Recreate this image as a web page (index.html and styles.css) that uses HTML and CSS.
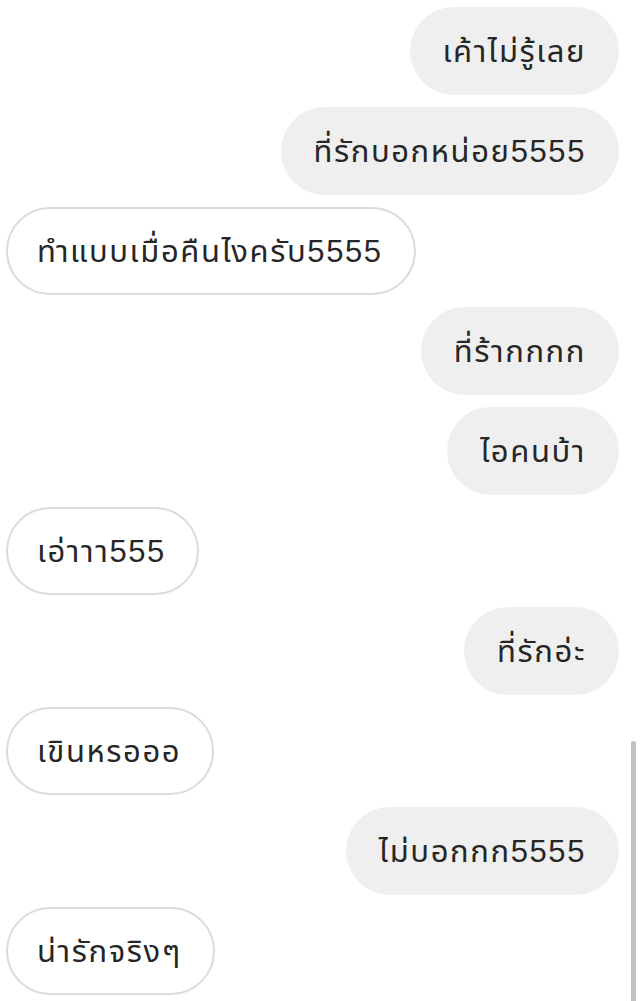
FILE: index.html
```html
<!DOCTYPE html>
<html lang="th">
<head>
<meta charset="utf-8">
<link rel="stylesheet" href="styles.css">
</head>
<body>
<div class="chat">
  <div class="msg me">เค้าไม่รู้เลย</div>
  <div class="msg me">ที่รักบอกหน่อย5555</div>
  <div class="msg them">ทำแบบเมื่อคืนไงครับ5555</div>
  <div class="msg me">ที่ร้ากกกก</div>
  <div class="msg me">ไอคนบ้า</div>
  <div class="msg them">เอ่าาา555</div>
  <div class="msg me">ที่รักอ่ะ</div>
  <div class="msg them">เขินหรอออ</div>
  <div class="msg me">ไม่บอกกก5555</div>
  <div class="msg them">น่ารักจริงๆ</div>
</div>
<div class="scrollbar"></div>
</body>
</html>
```
FILE: styles.css
```css
html, body {
  margin: 0;
  padding: 0;
  background: #ffffff;
  overflow: hidden;
  height: 1001px;
}
body {
  font-family: "Liberation Sans", "Noto Sans Thai", "Noto Sans", "DejaVu Sans", sans-serif;
  color: #262626;
}
.chat {
  display: flex;
  flex-direction: column;
  gap: 12px;
  padding: 7px 24px 0 6px;
}
.msg {
  box-sizing: border-box;
  height: 88px;
  display: flex;
  align-items: center;
  padding: 0 33px 0 33px;
  border-radius: 44px;
  font-size: 31px;
  letter-spacing: 1.6px;
  line-height: 1;
  white-space: nowrap;
}
.me {
  align-self: flex-end;
  background: #efefef;
}
.them {
  align-self: flex-start;
  background: #ffffff;
  border: 2px solid #dbdbdb;
  padding: 0 31px 0 29px;
}
.scrollbar {
  position: absolute;
  left: 631px;
  top: 741px;
  width: 5px;
  height: 270px;
  background: #c1c1c1;
  border-radius: 3px 3px 0 0;
}
```
